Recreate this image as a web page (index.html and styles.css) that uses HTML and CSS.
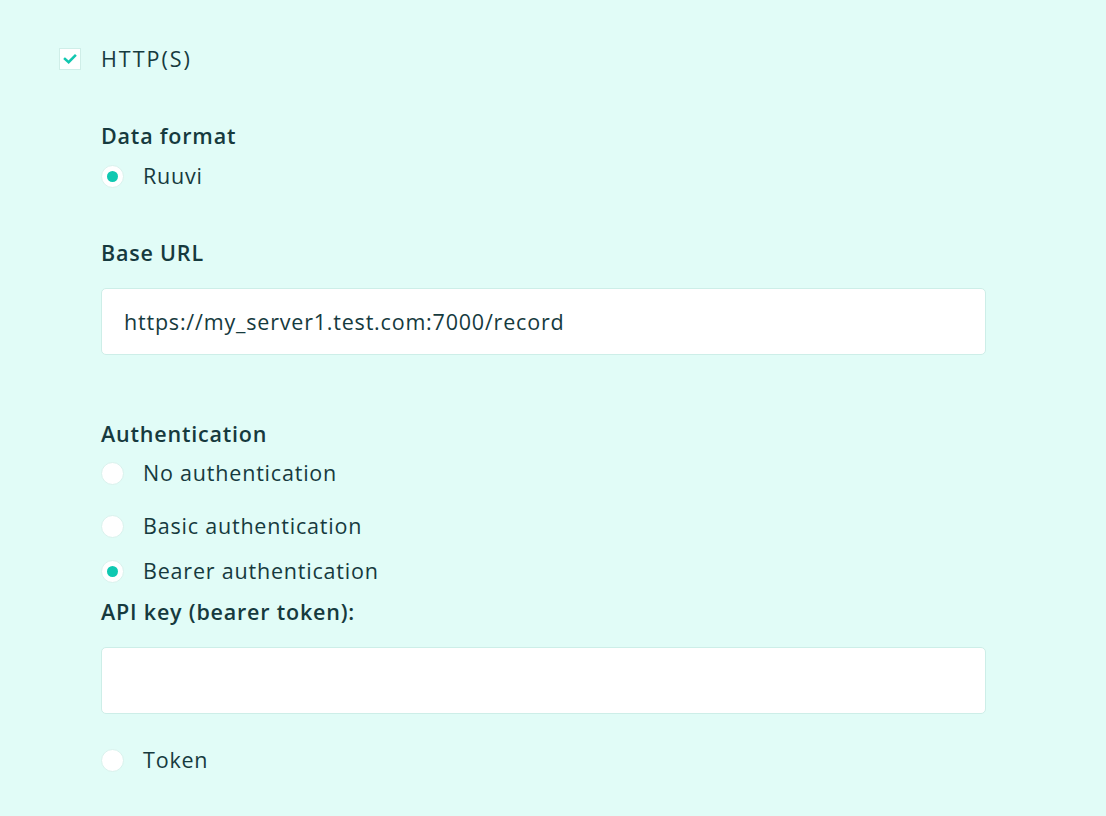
FILE: index.html
```html
<!DOCTYPE html>
<html lang="en">
<head>
<meta charset="utf-8">
<title>HTTP(S)</title>
<link rel="stylesheet" href="styles.css">
</head>
<body>
<div class="page">
  <label class="check-row">
    <span class="checkbox">
      <svg viewBox="0 0 22 22" width="22" height="22"><path d="M5.5 11 L9.5 14.5 L16.5 7.5" fill="none" stroke="#12c7b0" stroke-width="2.8" stroke-linecap="square"/></svg>
    </span>
    <span class="check-text">HTTP(S)</span>
  </label>

  <div class="section">
    <div class="label l-data">Data format</div>
    <div class="radio-row r-ruuvi"><span class="radio checked"></span><span>Ruuvi</span></div>

    <div class="label l-base">Base URL</div>
    <div class="input i-base">https://my_server1.test.com:7000/record</div>

    <div class="label l-auth">Authentication</div>
    <div class="radio-row r-no"><span class="radio"></span><span>No authentication</span></div>
    <div class="radio-row r-basic"><span class="radio"></span><span>Basic authentication</span></div>
    <div class="radio-row r-bearer"><span class="radio checked"></span><span>Bearer authentication</span></div>
    <div class="label l-api">API key (bearer token):</div>
    <div class="input i-api"></div>
    <div class="radio-row r-token"><span class="radio"></span><span>Token</span></div>
  </div>
</div>
</body>
</html>
```

FILE: styles.css
```css
html, body {
  margin: 0;
  padding: 0;
}
body {
  background: #e1fcf7;
  color: #163a3e;
  font-family: "Open Sans", "Noto Sans", sans-serif;
  font-size: 21.5px;
  letter-spacing: 0.8px;
  height: 816px;
  overflow: hidden;
}
.page {
  padding: 48px 0 0 59px;
}
.check-row {
  display: flex;
  align-items: center;
  gap: 20px;
  height: 22px;
}
.checkbox {
  width: 22px;
  height: 22px;
  box-sizing: border-box;
  background: #ffffff;
  border: 1px solid #cfeee8;
  display: flex;
  align-items: center;
  justify-content: center;
}
.checkbox svg {
  display: block;
}
.check-text {
  line-height: 24px;
  letter-spacing: 2px;
}
.section {
  padding-left: 42px;
  width: 885px;
}
.label {
  font-weight: 600;
  line-height: 24px;
  color: #163a3e;
  letter-spacing: 0.8px;
}
.radio-row {
  display: flex;
  align-items: center;
  gap: 19px;
  line-height: 24px;
  height: 24px;
}
.radio {
  width: 23px;
  height: 23px;
  box-sizing: border-box;
  border-radius: 50%;
  background: #ffffff;
  border: 1px solid #d9f2ed;
  display: flex;
  align-items: center;
  justify-content: center;
  flex: none;
}
.radio.checked::after {
  content: "";
  width: 11px;
  height: 11px;
  border-radius: 50%;
  background: #0fc8b1;
}
.input {
  box-sizing: border-box;
  height: 67px;
  background: #ffffff;
  border: 1px solid #cdeee8;
  border-radius: 5px;
  padding: 0 22px;
  display: flex;
  align-items: center;
  color: #163a3e;
}
.l-data { margin-top: 54px; }
.r-ruuvi { margin-top: 16px; }
.l-base { margin-top: 53px; }
.i-base { margin-top: 23px; }
.l-auth { margin-top: 67px; }
.r-no { margin-top: 15px; }
.r-basic { margin-top: 29px; }
.r-bearer { margin-top: 21px; }
.l-api { margin-top: 17px; }
.i-api { margin-top: 23px; }
.r-token { margin-top: 34px; }
```
